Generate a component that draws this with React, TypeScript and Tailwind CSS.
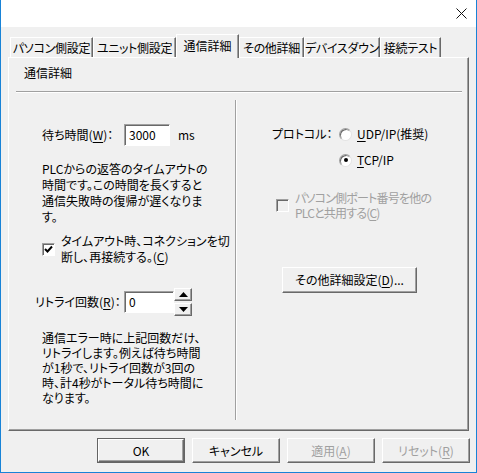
import type { ReactNode } from "react";

const raised =
  "border border-t-white border-l-white border-r-[#696969] border-b-[#696969] shadow-[inset_-1px_-1px_0_#a0a0a0]";
const sunken =
  "border border-t-[#a0a0a0] border-l-[#a0a0a0] border-r-white border-b-white shadow-[inset_1px_1px_0_#696969] bg-white";

function U({ children }: { children: ReactNode }) {
  return <span className="underline underline-offset-2 decoration-1">{children}</span>;
}

const tabs = [
  { label: "パソコン側設定", w: "w-[83px]" },
  { label: "ユニット側設定", w: "w-[83px]" },
  { label: "通信詳細", w: "w-[63px]", active: true },
  { label: "その他詳細", w: "w-[65px]" },
  { label: "デバイスダウン", w: "w-[76px]" },
  { label: "接続テスト", w: "w-[61px]" },
];

function CheckBox({ checked, disabled }: { checked?: boolean; disabled?: boolean }) {
  return (
    <div
      className={`w-[13px] h-[13px] shrink-0 flex items-center justify-center border border-t-[#a0a0a0] border-l-[#a0a0a0] border-r-white border-b-white shadow-[inset_1px_1px_0_#696969] ${
        disabled ? "bg-[#f0f0f0]" : "bg-white"
      }`}
    >
      {checked && (
        <svg width="9" height="9" viewBox="0 0 9 9">
          <path d="M1 4 L3.5 6.5 L8 1.5" fill="none" stroke="#000" strokeWidth="2" />
        </svg>
      )}
    </div>
  );
}

function Radio({ checked }: { checked?: boolean }) {
  return (
    <div className="w-[13px] h-[13px] shrink-0 rounded-full bg-white border border-t-[#a0a0a0] border-l-[#a0a0a0] border-r-[#e3e3e3] border-b-[#e3e3e3] shadow-[inset_1px_1px_0_#696969] flex items-center justify-center">
      {checked && <div className="w-[4px] h-[4px] rounded-full bg-black" />}
    </div>
  );
}

export default function App() {
  return (
    <div className="w-[477px] h-[473px] bg-[#f0f0f0] border-x border-b border-[#1883d7] flex flex-col text-[12px] text-black font-['Noto_Sans_CJK_JP',sans-serif] [font-feature-settings:'palt']">
      {/* Title bar */}
      <div className="h-[27px] bg-white flex justify-end items-start shrink-0">
        <svg width="11" height="11" viewBox="0 0 11 11" className="mt-[8px] mr-[9px]">
          <path d="M0.5 0.5 L10.5 10.5 M10.5 0.5 L0.5 10.5" stroke="#111" strokeWidth="1" />
        </svg>
      </div>

      {/* Tabs */}
      <div className="mt-[7px] pl-[9px] h-[23px] flex items-end">
        {tabs.map((t) =>
          t.active ? (
            <div
              key={t.label}
              className={`${t.w} h-[24px] relative top-px z-10 bg-[#f0f0f0] border-t border-l border-white border-r border-r-[#696969] shadow-[inset_-1px_0_0_#a0a0a0] flex items-center justify-center leading-none whitespace-nowrap pb-[2px]`}
            >
              {t.label}
            </div>
          ) : (
            <div
              key={t.label}
              className={`${t.w} h-[20px] border-t border-l border-white border-r border-r-[#696969] shadow-[inset_-1px_0_0_#a0a0a0] flex items-center justify-center leading-none whitespace-nowrap tracking-[-0.3px]`}
            >
              {t.label}
            </div>
          )
        )}
      </div>

      {/* Panel */}
      <div className={`ml-[7px] w-[461px] h-[374px] shrink-0 flex flex-col ${raised}`}>
        <div className="pl-[15px] pt-[7px] leading-[16px]">通信詳細</div>
        <div className="mt-[10px] ml-[7px] mr-[6px] border-t border-[#a0a0a0] border-b border-b-white" />

        <div className="flex flex-1">
          {/* Left column */}
          <div className="w-[226px] pl-[33px] flex flex-col">
            <div className="mt-[31px] flex items-center">
              <span className="w-[82px] leading-[16px]">
                待ち時間(<U>W</U>)：
              </span>
              <div className={`w-[46px] h-[22px] pl-[4px] flex items-center ${sunken}`}>3000</div>
              <span className="ml-[8px]">ms</span>
            </div>

            <p className="mt-[15px] leading-[16px] whitespace-nowrap">
              PLCからの返答のタイムアウトの
              <br />
              時間です。この時間を長くすると
              <br />
              通信失敗時の復帰が遅くなりま
              <br />
              す。
            </p>

            <div className="mt-[8px] flex items-center gap-[6px]">
              <CheckBox checked />
              <span className="leading-[16px] whitespace-nowrap">
                タイムアウト時、コネクションを切
                <br />
                断し、再接続する。(<U>C</U>)
              </span>
            </div>

            <div className="mt-[23px] -ml-[7px] flex items-center">
              <span className="w-[89px] leading-[16px]">
                リトライ回数(<U>R</U>)：
              </span>
              <div className={`w-[50px] h-[22px] pl-[4px] flex items-center ${sunken}`}>0</div>
              <div className="w-[18px] h-[28px] flex flex-col justify-between">
                <div className={`h-[13px] flex items-center justify-center bg-[#f0f0f0] ${raised}`}>
                  <svg width="9" height="5" viewBox="0 0 9 5">
                    <path d="M0 5 L4.5 0 L9 5 Z" fill="#000" />
                  </svg>
                </div>
                <div className={`h-[13px] flex items-center justify-center bg-[#f0f0f0] ${raised}`}>
                  <svg width="9" height="5" viewBox="0 0 9 5">
                    <path d="M0 0 L4.5 5 L9 0 Z" fill="#000" />
                  </svg>
                </div>
              </div>
            </div>

            <p className="mt-[14px] leading-[15px] whitespace-nowrap">
              通信エラー時に上記回数だけ、
              <br />
              リトライします。例えば待ち時間
              <br />
              が1秒で、リトライ回数が3回の
              <br />
              時、計4秒がトータル待ち時間に
              <br />
              なります。
            </p>
          </div>

          {/* Divider */}
          <div className="mt-[7px] h-[320px] w-[2px] border-l border-[#a0a0a0] border-r border-r-white" />

          {/* Right column */}
          <div className="flex-1 flex flex-col">
            <div className="mt-[33px] pl-[35px] flex">
              <span className="w-[67px] leading-[16px]">プロトコル：</span>
              <div className="flex flex-col gap-[10px]">
                <div className="h-[16px] flex items-center gap-[5px]">
                  <Radio />
                  <span>
                    <U>U</U>DP/IP(推奨)
                  </span>
                </div>
                <div className="h-[16px] flex items-center gap-[5px]">
                  <Radio checked />
                  <span>
                    <U>T</U>CP/IP
                  </span>
                </div>
              </div>
            </div>

            <div className="mt-[22px] pl-[39px] flex items-center gap-[6px] text-[#a0a0a0]">
              <CheckBox disabled />
              <span className="leading-[15px] whitespace-nowrap tracking-[-0.8px]">
                パソコン側ポート番号を他の
                <br />
                PLCと共用する(<U>C</U>)
              </span>
            </div>

            <div className="mt-[47px] pl-[45px]">
              <div className={`w-[135px] h-[26px] flex items-center justify-center bg-[#f0f0f0] ${raised}`}>
                その他詳細設定(<U>D</U>)...
              </div>
            </div>
          </div>
        </div>
      </div>

      {/* Buttons */}
      <div className="mt-[7px] pl-[96px] flex gap-[7px]">
        <div className="w-[88px] h-[25px] border border-[#646464] flex">
          <div className={`flex-1 flex items-center justify-center ${raised}`}>OK</div>
        </div>
        <div className={`w-[88px] h-[25px] flex items-center justify-center ${raised}`}>キャンセル</div>
        <div className={`w-[88px] h-[25px] flex items-center justify-center text-[#a0a0a0] ${raised}`}>
          適用(<U>A</U>)
        </div>
        <div className={`w-[88px] h-[25px] flex items-center justify-center text-[#a0a0a0] ${raised}`}>
          リセット(<U>R</U>)
        </div>
      </div>
    </div>
  );
}
